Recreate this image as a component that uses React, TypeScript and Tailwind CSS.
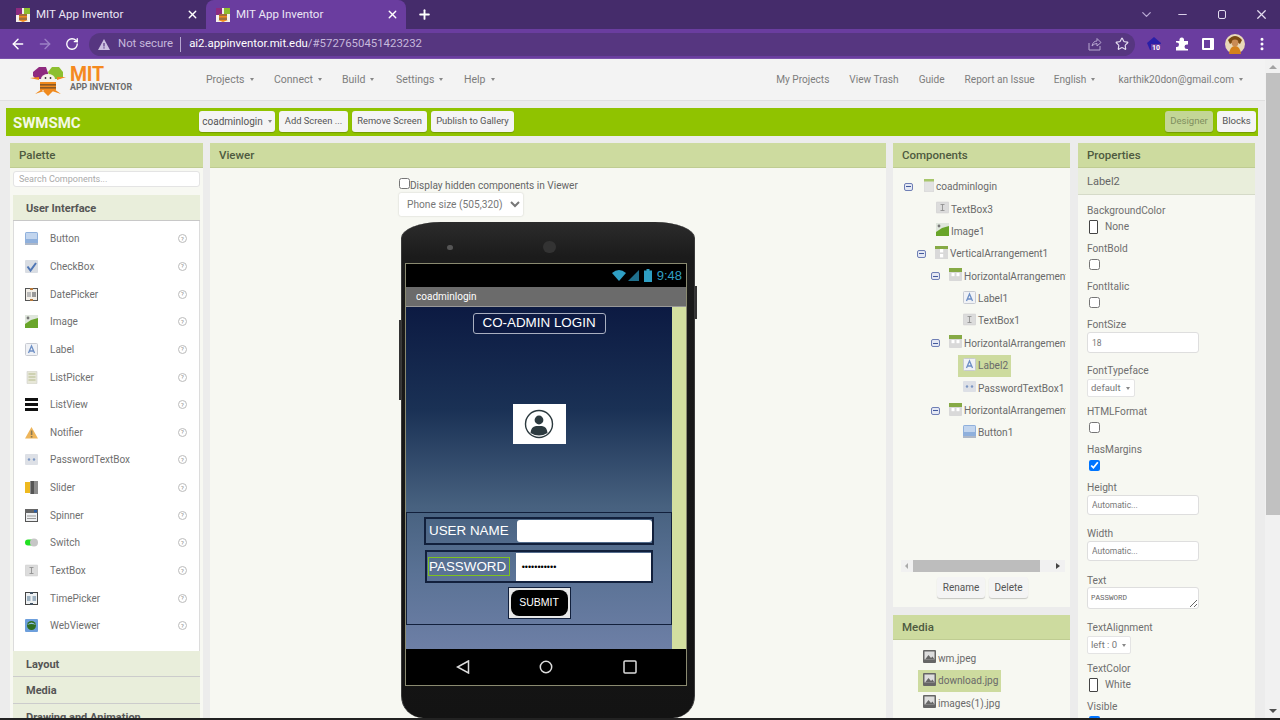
import React from "react";
import { ArrowLeft, ArrowRight, RotateCw, Star, ChevronDown, Minus, X, Plus, EllipsisVertical } from "lucide-react";

const Fav = () => (
  <svg width="14" height="14" viewBox="0 0 14 14" className="shrink-0">
    <rect width="14" height="14" fill="#f4f1ec" />
    <rect x="0" y="0" width="6" height="7" fill="#8e2a7f" />
    <rect x="8" y="0" width="6" height="6" fill="#8dbf2f" />
    <rect x="3" y="6" width="8" height="6" fill="#a0703a" />
    <rect x="3" y="8" width="8" height="1.5" fill="#f08a1d" />
    <path d="M2 12 L7 14 L12 12 Z" fill="#f08a1d" />
  </svg>
);

const Tab = ({ active }: { active?: boolean }) => (
  <div className={"flex items-center h-[29px] w-[200px] pl-[10px] pr-[7px] rounded-t-[8px] " + (active ? "bg-[#6a3d9f]" : "bg-transparent")}>
    <Fav />
    <span className="ml-[6px] flex-1 text-[11.5px] text-[#ece6f5] whitespace-nowrap">MIT App Inventor</span>
    <X size={13} strokeWidth={2.5} className="text-white" />
  </div>
);

const Caret = () => <span className="ml-[5px] inline-block w-0 h-0 border-x-[2px] border-x-transparent border-t-[3px] border-t-[#888]" />;

const Logo = () => (
  <div className="flex items-start w-[102px] h-[32px] relative">
    <svg width="36" height="32" viewBox="0 0 36 32" className="shrink-0">
      <path d="M3 8 L9 3 L16 3 L18 9 L18 15 L6 15 L3 12 Z" fill="#8e2a7f" />
      <path d="M18 8 L22 3 L29 3 L33 8 L33 13 L29 15 L20 15 Z" fill="#8dbf2f" />
      <path d="M0 14 L9 13 L9 16 Z M36 13 L27 13 L27 16 Z" fill="#f08a1d" />
      <ellipse cx="18" cy="15" rx="7" ry="5" fill="#f7f3ea" />
      <circle cx="15.5" cy="14" r="0.9" fill="#333" />
      <circle cx="20.5" cy="14" r="0.9" fill="#333" />
      <rect x="10" y="18" width="16" height="8" fill="#f08a1d" />
      <rect x="10" y="20" width="16" height="1.6" fill="#8a5a26" />
      <rect x="10" y="23" width="16" height="1.6" fill="#8a5a26" />
      <path d="M12 26 L18 32 L24 26 Z M5 30 L12 25 L14 27 Z M31 30 L24 25 L22 27 Z" fill="#f08a1d" />
    </svg>
    <div className="ml-[4px] flex flex-col">
      <span className="text-[19.5px] leading-[16px] mt-[3px] font-bold text-[#f58a1f] tracking-[-0.2px]">MIT</span>
      <span className="text-[8.8px] leading-[8px] font-bold text-[#6c6c6c] whitespace-nowrap">APP INVENTOR</span>
    </div>
  </div>
);

const GBtn = ({ children, w, caret, selected }: { children: React.ReactNode; w: string; caret?: boolean; selected?: boolean }) => (
  <div className={"flex items-center justify-center h-[21px] rounded-[3px] whitespace-nowrap shadow-[0_1px_1px_rgba(0,0,0,0.2)] " + w + " " + (selected ? "bg-[#c3d696] text-[#7f8f5f]" : "bg-[#f4f4f4] text-[#555]")}>
    {children}
    {caret && <Caret />}
  </div>
);

const ic = "shrink-0 w-[13px] h-[13px]";
type IP = { name: string };
const Ico = ({ name }: IP) => {
  switch (name) {
    case "button":
      return (<svg viewBox="0 0 13 13" className={ic}><rect width="13" height="13" rx="1.5" fill="#8fb0dc" /><rect x="1" y="1" width="11" height="6" fill="#c2d5ee" /><rect x="0" y="11" width="13" height="2" fill="#aeb8c8" /></svg>);
    case "check":
      return (<svg viewBox="0 0 13 13" className={ic}><rect width="13" height="13" rx="1" fill="#d9dde3" /><path d="M2.5 6.5 L5.5 10.5 L11 3" stroke="#4f76b5" strokeWidth="2" fill="none" /></svg>);
    case "date":
      return (<svg viewBox="0 0 13 13" className={ic}><rect x=".5" y=".5" width="12" height="12" fill="#f3efe8" stroke="#555" /><rect x="2" y="4" width="4" height="5" fill="#bbb" /><rect x="7" y="4" width="4" height="5" fill="#999" /><rect x="5" y="0" width="3" height="2" fill="#b7793a" /><rect x="5" y="11" width="3" height="2" fill="#b7793a" /></svg>);
    case "image":
      return (<svg viewBox="0 0 13 13" className={ic}><rect width="13" height="13" fill="#dfe6dc" /><circle cx="3" cy="3" r="1.4" fill="#777" /><path d="M0 9 L6 5 L13 3 L13 13 L0 13 Z" fill="#69a52a" /></svg>);
    case "label":
      return (<svg viewBox="0 0 13 13" className={ic}><rect x=".5" y=".5" width="12" height="12" rx="1" fill="#f0f2f6" stroke="#c8cbd2" /><path d="M3.5 10 L6.5 3 L9.5 10 M4.7 8 L8.3 8" stroke="#6d8fc5" strokeWidth="1.3" fill="none" /></svg>);
    case "list":
      return (<svg viewBox="0 0 13 13" className={ic}><rect x="2" y="0" width="10" height="13" rx="1" fill="#e7e7d8" stroke="#ccc" strokeWidth=".6" /><path d="M3.5 3H10.5M3.5 6H10.5M3.5 9H10.5" stroke="#b5bb8c" strokeWidth="1" /></svg>);
    case "listview":
      return (<svg viewBox="0 0 13 13" className={ic}><rect width="13" height="3" fill="#111" /><rect y="5" width="13" height="3" fill="#111" /><rect y="10" width="13" height="3" fill="#111" /></svg>);
    case "notifier":
      return (<svg viewBox="0 0 13 13" className={ic}><path d="M6.5 1 L13 12.5 L0 12.5 Z" fill="#eeb55a" /><rect x="5.8" y="4.5" width="1.6" height="4.5" fill="#8a7a55" /><rect x="5.8" y="10" width="1.6" height="1.6" fill="#8a7a55" /></svg>);
    case "password":
      return (<svg viewBox="0 0 13 13" className={ic}><rect width="13" height="11" y="1" rx="1" fill="#dde0e6" /><circle cx="4" cy="6.5" r="1.2" fill="#7b96c2" /><circle cx="9" cy="6.5" r="1.2" fill="#7b96c2" /></svg>);
    case "slider":
      return (<svg viewBox="0 0 13 13" className={ic}><rect width="5" height="11" y="1" fill="#eeb91f" /><rect x="5" width="8" height="13" fill="#8c8c8c" /><rect x="6" y="0" width="3" height="13" fill="#555" /></svg>);
    case "spinner":
      return (<svg viewBox="0 0 13 13" className={ic}><rect x=".5" y=".5" width="12" height="12" fill="#eef0f2" stroke="#555" /><rect x="0" y="0" width="13" height="4" fill="#666" /><rect x="9" y="1" width="3" height="2.4" fill="#2c5fa8" /><path d="M2 7H11M2 9.5H11" stroke="#999" /></svg>);
    case "switch":
      return (<svg viewBox="0 0 13 13" className={ic}><rect x="0" y="3.5" width="10" height="6" rx="3" fill="#22e022" /><circle cx="9" cy="6.5" r="4" fill="#c6c6c6" /></svg>);
    case "textbox":
      return (<svg viewBox="0 0 13 13" className={ic}><rect y="1" width="13" height="11" rx="1" fill="#dcdcdc" stroke="#ccc" strokeWidth=".5" /><path d="M4.5 3.5H8.5M4.5 9.5H8.5M6.5 3.5V9.5" stroke="#888" strokeWidth=".8" /></svg>);
    case "time":
      return (<svg viewBox="0 0 13 13" className={ic}><rect x=".5" y=".5" width="12" height="12" fill="#eef1f3" stroke="#444" /><rect x="2" y="4" width="3.5" height="5" fill="#9cb0c0" /><rect x="7.5" y="4" width="3.5" height="5" fill="#9cb0c0" /><rect x="5" y="0" width="3" height="2" fill="#456" /><rect x="5" y="11" width="3" height="2" fill="#456" /></svg>);
    case "web":
      return (<svg viewBox="0 0 13 13" className={ic}><rect width="13" height="13" rx="1" fill="#6d9fdc" /><circle cx="6.5" cy="6.5" r="4.5" fill="#2f6e22" /><path d="M2 6 Q6.5 1 11 6 Q6.5 4 2 6" fill="#8fc0e8" /></svg>);
    case "form":
      return (<svg viewBox="0 0 10 13" className="shrink-0 w-[10px] h-[13px] ml-[2px]"><rect y="0" width="10" height="13" rx="1.5" fill="#e2e2e2" stroke="#ccc" strokeWidth=".5" /><rect width="10" height="2.5" fill="#a7c66b" /></svg>);
    case "vert":
      return (<svg viewBox="0 0 13 13" className={ic}><rect width="13" height="13" fill="#d9d9d9" /><rect x="0" width="13" height="3" fill="#86aa45" /><rect x="5" y="3" width="3.2" height="3.4" fill="#fff" /><rect x="5" y="8" width="3.2" height="3.4" fill="#fff" /></svg>);
    case "horiz":
      return (<svg viewBox="0 0 13 13" className={ic}><rect width="13" height="13" rx="1" fill="#d9d9d9" /><rect width="13" height="4" fill="#86aa45" /><rect x="2.5" y="5" width="3" height="3.2" fill="#fff" /><rect x="7.5" y="5" width="3" height="3.2" fill="#fff" /></svg>);
    case "media":
      return (<svg viewBox="0 0 13 13" className={ic}><rect width="13" height="13" rx="1" fill="#666" /><rect x="1.5" y="1.5" width="10" height="8" fill="#ddd" /><path d="M2 9.5 L5.5 5 L8 8 L9.5 6.5 L11.5 9.5 Z" fill="#666" /></svg>);
  }
  return null;
};

const palette: [string, string][] = [
  ["button", "Button"], ["check", "CheckBox"], ["date", "DatePicker"], ["image", "Image"], ["label", "Label"],
  ["list", "ListPicker"], ["listview", "ListView"], ["notifier", "Notifier"], ["password", "PasswordTextBox"],
  ["slider", "Slider"], ["spinner", "Spinner"], ["switch", "Switch"], ["textbox", "TextBox"], ["time", "TimePicker"], ["web", "WebViewer"],
];

const Head = ({ children }: { children: React.ReactNode }) => (
  <div className="h-[25px] shrink-0 flex items-center pl-[9px] pt-[2px] bg-[#cddb9f] border-b border-[#bfcc92] text-[11.5px] font-medium text-[#4e5a40]">{children}</div>
);

const Sec = ({ children, cls }: { children: React.ReactNode; cls: string }) => (
  <div className={"mx-[3px] flex items-center pl-[13px] pt-[3px] bg-[#e9eedb] text-[11px] font-bold text-[#555] whitespace-nowrap " + cls}>{children}</div>
);

const Palette = () => (
  <div className="w-[193px] shrink-0 bg-[#f7f8f2] flex flex-col overflow-hidden">
    <Head>Palette</Head>
    <input readOnly placeholder="Search Components..." className="mx-[3px] mt-[3px] h-[16px] shrink-0 bg-white rounded-[3px] border border-[#e4e4e4] px-[5px] text-[9px] placeholder:text-[#aaa] outline-none" />
    <Sec cls="mt-[8px] h-[26px] shrink-0 border-b border-[#c8c8c8]">User Interface</Sec>
    <div className="mx-[3px] h-[430px] shrink-0 bg-white border-x border-[#dcdcdc] pt-[4px]">
      {palette.map(([n, t]) => (
        <div key={t} className="h-[27.65px] flex items-center pl-[11px] pr-[12px]">
          <Ico name={n} />
          <span className="ml-[12px] flex-1 text-[10px] text-[#6f6f6f]">{t}</span>
          <span className="w-[9px] h-[9px] rounded-full border border-[#bbb] flex items-center justify-center text-[6px] leading-none text-[#888]">?</span>
        </div>
      ))}
    </div>
    <Sec cls="h-[26px] shrink-0 border-b border-[#ccc]">Layout</Sec>
    <Sec cls="h-[27px] shrink-0 border-b border-[#ccc]">Media</Sec>
    <Sec cls="h-[26px] shrink-0">Drawing and Animation</Sec>
  </div>
);

const Screen = () => (
  <div className="w-[282px] border border-[#8a8a70] flex flex-col">
    <div className="h-[23px] bg-black flex items-center justify-end pr-[4px]">
      <svg width="27" height="13" viewBox="0 0 27 13">
        <path d="M0 4 Q7 -2 14 4 L7 12 Z" fill="#2f9fc4" />
        <path d="M16 12 L27 12 L27 1 Z" fill="#1f6f8c" />
      </svg>
      <svg width="8" height="13" viewBox="0 0 8 13" className="ml-[5px]"><rect x="2.5" width="3" height="2" fill="#2f9fc4" /><rect y="1.5" width="8" height="11.5" fill="#2f9fc4" /></svg>
      <span className="ml-[5px] text-[13px] leading-none text-[#2f9fc4] [font-family:'Liberation_Sans',sans-serif]">9:48</span>
    </div>
    <div className="h-[20px] bg-[#6b6b6b] flex items-center pl-[10px] text-[10px] text-white border-b border-[#999]">coadminlogin</div>
    <div className="h-[342px] flex [font-family:'Liberation_Sans',sans-serif]">
      <div className="w-[267px] flex flex-col items-center bg-[linear-gradient(180deg,#0c1a42_0%,#1a3155_30%,#47617f_58%,#5a7295_78%,#6d7fa6_100%)]">
        <div className="mt-[6px] w-[133px] h-[21px] shrink-0 border border-[#a9afc0] rounded-[3px] bg-[#0d1a42] flex items-center justify-center text-[13.4px] text-white">CO-ADMIN LOGIN</div>
        <div className="mt-[70px] w-[53px] h-[40px] shrink-0 bg-white flex items-center justify-center">
          <svg width="30" height="30" viewBox="0 0 30 30">
            <circle cx="15" cy="15" r="13.5" fill="none" stroke="#2c3a3f" strokeWidth="1.4" />
            <circle cx="15" cy="11" r="4.4" fill="#2c3a3f" />
            <path d="M6.5 24 Q7 17.5 12 17 L18 17 Q23 17.5 23.5 24 Q15 29 6.5 24 Z" fill="#2c3a3f" />
          </svg>
        </div>
        <div className="mt-[68px] w-[266px] h-[113px] shrink-0 border border-[#12203c] flex flex-col items-center">
          <div className="mt-[4px] w-[230px] h-[28px] border-2 border-[#12203c] flex items-center pl-[3px]">
            <span className="w-[88px] text-[13.4px] text-white whitespace-nowrap">USER NAME</span>
            <div className="w-[135px] h-[22px] bg-white rounded-[3px]" />
          </div>
          <div className="mt-[5px] w-[228px] h-[33px] border-2 border-[#12203c] flex items-center pl-[1px]">
            <span className="w-[82px] h-[19px] border border-[#7dc21e] text-[13.4px] leading-[17px] text-white whitespace-nowrap">PASSWORD</span>
            <div className="ml-[6px] w-[136px] h-[28px] bg-white flex items-center pl-[6px] pt-[2px] text-[9px] text-black">•••••••••••</div>
          </div>
          <div className="mt-[4px] w-[63px] h-[32px] border border-[#12203c] bg-[#e8e8e8] flex items-center justify-center">
            <div className="w-[57px] h-[26px] bg-black rounded-[8px] flex items-center justify-center text-[10.5px] text-white">SUBMIT</div>
          </div>
        </div>
      </div>
      <div className="w-[14px] bg-[#d3dfa0]" />
    </div>
    <div className="h-[36px] bg-black flex items-center">
      <svg width="14" height="14" viewBox="0 0 14 14" className="ml-[50px]"><path d="M12.5 1 L1.5 7 L12.5 13 Z" fill="none" stroke="#ddd" strokeWidth="1.5" /></svg>
      <svg width="14" height="14" viewBox="0 0 14 14" className="ml-[69px]"><circle cx="7" cy="7" r="5.7" fill="none" stroke="#ddd" strokeWidth="1.5" /></svg>
      <svg width="14" height="14" viewBox="0 0 14 14" className="ml-[70px]"><rect x="1" y="1" width="12" height="12" rx="1" fill="none" stroke="#ddd" strokeWidth="1.5" /></svg>
    </div>
  </div>
);

const Viewer = () => (
  <div className="w-[676px] shrink-0 bg-[#f7f8f2] flex flex-col overflow-hidden">
    <Head>Viewer</Head>
    <div className="flex-1 flex flex-col items-center overflow-hidden">
      <div className="w-[298px] shrink-0">
        <label className="mt-[10px] flex items-start h-[15px] text-[10.1px] text-[#666] whitespace-nowrap">
          <input type="checkbox" readOnly className="w-[11px] h-[11px] m-0" />
          <span className="leading-[15px]">Display hidden components in Viewer</span>
        </label>
        <select className="block w-[124px] h-[23px] bg-white rounded-[2px] shadow-[0_0_2px_rgba(0,0,0,0.2)] text-[10.2px] text-[#777] pl-[4px] outline-none">
          <option>Phone size (505,320)</option>
        </select>
        <div className="relative mt-[6px] ml-[2px] w-[294px] h-[496px] pt-[41px] pl-[3px] bg-[linear-gradient(180deg,#2c2c2c_0%,#1b1b1b_7%,#131313_100%)] rounded-[40px_40px_22px_22px/16px_16px_22px_22px] border-x border-[#3a3a3a]">
          <span className="absolute -left-[3px] top-[98px] w-[2px] h-[80px] bg-[#333]" />
          <span className="absolute -right-[3px] top-[64px] w-[2px] h-[33px] bg-[#333]" />
          <span className="absolute left-[45px] top-[23px] w-[6px] h-[5px] rounded-full bg-[#555]" />
          <span className="absolute left-[141px] top-[19px] w-[13px] h-[12px] rounded-full bg-[#333]" />
          <Screen />
        </div>
      </div>
    </div>
  </div>
);

const MinusBox = () => (
  <span className="shrink-0 mr-[4px] w-[9px] h-[8px] rounded-[2px] border border-[#6f7fb5] bg-[#e4e8f3] flex items-center justify-center">
    <span className="w-[5px] h-[1px] bg-[#445a9c]" />
  </span>
);

const TreeRow = ({ pl, icon, text, minus, sel }: { pl: string; icon: string; text: string; minus?: boolean; sel?: boolean }) => (
  <div className={"h-[22.4px] flex items-center whitespace-nowrap " + pl}>
    {minus && <MinusBox />}
    <span className={"h-full flex items-center pl-[5px] pr-[3px] " + (sel ? "bg-[#cddb9f]" : "")}>
      <span className="-mt-[3px] flex"><Ico name={icon} /></span>
      <span className="ml-[2px] text-[10.1px] text-[#6a6a6a]">{text}</span>
    </span>
  </div>
);

const Components = () => (
  <div className="w-[177px] shrink-0 flex flex-col">
    <div className="h-[464px] shrink-0 bg-[#f7f8f2] flex flex-col overflow-hidden">
      <Head>Components</Head>
      <div className="mt-[7.5px] h-[384.5px] shrink-0 overflow-hidden mr-[4px]">
        <TreeRow pl="pl-[11px]" icon="form" text="coadminlogin" minus />
        <TreeRow pl="pl-[38px]" icon="textbox" text="TextBox3" />
        <TreeRow pl="pl-[38px]" icon="image" text="Image1" />
        <TreeRow pl="pl-[24px]" icon="vert" text="VerticalArrangement1" minus />
        <TreeRow pl="pl-[38px]" icon="horiz" text="HorizontalArrangement1" minus />
        <TreeRow pl="pl-[65px]" icon="label" text="Label1" />
        <TreeRow pl="pl-[65px]" icon="textbox" text="TextBox1" />
        <TreeRow pl="pl-[38px]" icon="horiz" text="HorizontalArrangement2" minus />
        <TreeRow pl="pl-[65px]" icon="label" text="Label2" sel />
        <TreeRow pl="pl-[65px]" icon="password" text="PasswordTextBox1" />
        <TreeRow pl="pl-[38px]" icon="horiz" text="HorizontalArrangement3" minus />
        <TreeRow pl="pl-[65px]" icon="button" text="Button1" />
      </div>
      <div className="ml-[8px] w-[164px] h-[12px] shrink-0 bg-[#f1f1f1] flex items-center">
        <span className="ml-[4px] w-0 h-0 border-y-[3px] border-y-transparent border-r-[3px] border-r-[#aaa]" />
        <span className="ml-[5px] w-[127px] h-[12px] bg-[#bdbdbd]" />
        <span className="ml-[16px] w-0 h-0 border-y-[3px] border-y-transparent border-l-[4px] border-l-[#444]" />
      </div>
      <div className="mt-[5px] pl-[44px] flex gap-[4px]">
        <GBtn w="w-[48px] text-[10px]">Rename</GBtn>
        <GBtn w="w-[39px] text-[10px]">Delete</GBtn>
      </div>
    </div>
    <div className="mt-[8px] flex-1 bg-[#f7f8f2] flex flex-col overflow-hidden">
      <Head>Media</Head>
      <div className="mt-[7px] pl-[25px] flex flex-col">
        {[["wm.jpeg", false], ["download.jpg", true], ["images(1).jpg", false], ["", false]].map(([t, s]) => (
          <div key={t as string} className="h-[22.5px] flex">
            <span className={"h-full flex items-center pl-[5px] pr-[3px] " + (s ? "bg-[#cddb9f]" : "")}>
              <span className="-mt-[3px] flex"><Ico name="media" /></span>
              <span className="ml-[2px] text-[10.1px] text-[#6a6a6a]">{t as string}</span>
            </span>
          </div>
        ))}
      </div>
    </div>
  </div>
);

const Prop = ({ label, mt, children }: { label: string; mt: string; children: React.ReactNode }) => (
  <div className={mt}>
    <div className="h-[14px] leading-[14px] text-[10.2px] text-[#6f6f6f]">{label}</div>
    {children}
  </div>
);

const Swatch = ({ t }: { t: string }) => (
  <div className="ml-[2px] mt-[2px] h-[14px] flex items-center text-[10.2px] text-[#6f6f6f]">
    <span className="w-[9px] h-[14px] bg-white border border-[#444] rounded-[1px]" />
    <span className="ml-[7px]">{t}</span>
  </div>
);

const Cb = ({ on, mt }: { on?: boolean; mt: string }) => (
  <input type="checkbox" readOnly checked={!!on} className={"block ml-[2px] w-[11px] h-[11px] " + mt} />
);

const TBox = ({ v, placeholder, cls }: { v?: string; placeholder?: string; cls: string }) => (
  <input readOnly value={v} placeholder={placeholder} className={"block w-[112px] bg-white rounded-[3px] border border-[#dedede] px-[4px] text-[8.5px] text-[#777] placeholder:text-[#777] outline-none " + cls} />
);

const Drop = ({ t, w }: { t: string; w: string }) => (
  <div className={"h-[18px] bg-white rounded-[2px] border border-[#e4e4e4] flex items-center pl-[3px] text-[9.5px] text-[#777] whitespace-nowrap " + w}>
    {t}
    <Caret />
  </div>
);

const Properties = () => (
  <div className="w-[177px] shrink-0 bg-[#f7f8f2] flex flex-col overflow-hidden">
    <Head>Properties</Head>
    <div className="h-[27px] shrink-0 bg-[#e9eedb] border-b border-[#d5dac8] flex items-center pl-[9px] pt-[3px] text-[11px] text-[#666]">Label2</div>
    <div className="pl-[9px] pt-[9px]">
      <Prop label="BackgroundColor" mt="mt-0"><Swatch t="None" /></Prop>
      <Prop label="FontBold" mt="mt-[8px]"><Cb mt="mt-[3px]" /></Prop>
      <Prop label="FontItalic" mt="mt-[10px]"><Cb mt="mt-[3px]" /></Prop>
      <Prop label="FontSize" mt="mt-[10px]"><TBox v="18" cls="h-[21px]" /></Prop>
      <Prop label="FontTypeface" mt="mt-[11px]"><div className="mt-[1px]"><Drop t="default" w="w-[48px]" /></div></Prop>
      <Prop label="HTMLFormat" mt="mt-[8px]"><Cb mt="mt-[3px]" /></Prop>
      <Prop label="HasMargins" mt="mt-[10px]"><Cb on mt="mt-[3px]" /></Prop>
      <Prop label="Height" mt="mt-[10px]"><TBox placeholder="Automatic..." cls="h-[20px]" /></Prop>
      <Prop label="Width" mt="mt-[12px]"><TBox placeholder="Automatic..." cls="h-[20px]" /></Prop>
      <Prop label="Text" mt="mt-[13px]">
        <textarea readOnly value="PASSWORD" className="block -mt-[1px] w-[112px] h-[22px] bg-white rounded-[3px] border border-[#dedede] px-[3px] py-[5px] text-[7.5px] leading-[10px] [font-family:'Liberation_Mono',monospace] text-[#666] outline-none" />
      </Prop>
      <Prop label="TextAlignment" mt="mt-[12px]"><div className="mt-[1px]"><Drop t="left : 0" w="w-[44px]" /></div></Prop>
      <Prop label="TextColor" mt="mt-[8px]"><Swatch t="White" /></Prop>
      <Prop label="Visible" mt="mt-[8px]"><Cb on mt="mt-[2px]" /></Prop>
    </div>
  </div>
);

export default function App() {
  return (
    <div className="w-[1280px] h-[720px] overflow-hidden flex flex-col bg-[#ececec] [font-family:Roboto,sans-serif]">
      <div className="h-[29px] shrink-0 bg-[#452c6b] flex items-center pl-[6px] pr-[11px]">
        <Tab />
        <Tab active />
        <Plus size={15} strokeWidth={3} className="ml-[11px] text-white" />
        <div className="flex-1" />
        <ChevronDown size={15} className="text-[#b9a9d3]" />
        <Minus size={13} className="ml-[22px] text-[#d9d0e8]" />
        <span className="ml-[29px] w-[8px] h-[9px] border border-[#e3dcef] rounded-[2px]" />
        <X size={15} className="ml-[28px] text-[#e3dcef]" />
      </div>
      <div className="h-[30px] shrink-0 bg-[#6a3d9f] flex items-center pl-[10px] pr-[10px] pt-[1px] border-b border-[#7a52ab]">
        <ArrowLeft size={16} strokeWidth={2.2} className="text-white" />
        <ArrowRight size={16} strokeWidth={2} className="ml-[11px] text-[#9c81c6]" />
        <RotateCw size={14} strokeWidth={2.3} className="ml-[12px] text-white" />
        <div className="ml-[10px] w-[1046px] h-[23px] rounded-full bg-[#563680] flex items-center pl-[9px] pr-[6px]">
          <svg width="12" height="11" viewBox="0 0 12 11"><path d="M6 0 L12 11 L0 11 Z" fill="#cbbfe0" /><rect x="5.4" y="4" width="1.2" height="3.5" fill="#563680" /><rect x="5.4" y="8.3" width="1.2" height="1.2" fill="#563680" /></svg>
          <span className="ml-[8px] text-[11.4px] text-[#c6b8dc]">Not secure</span>
          <span className="ml-[7px] w-px h-[15px] bg-[#b7a7d0]" />
          <span className="ml-[8px] text-[11.4px] text-white">ai2.appinventor.mit.edu<span className="text-[#c6b8dc]">/#5727650451423232</span></span>
          <div className="flex-1" />
          <svg width="14" height="14" viewBox="0 0 14 14" fill="none" stroke="#b7a7d0" strokeWidth="1"><path d="M1 6V13H12V9" /><path d="M4 9 Q5 4 9 4 V1.5 L13 5.5 L9 9 V6.5 Q6 6.5 4 9 Z" /></svg>
          <Star size={14} className="ml-[13px] text-[#e4dcef]" />
        </div>
        <div className="relative ml-[11px] w-[16px] h-[16px]">
          <svg width="16" height="16" viewBox="0 0 16 16"><path d="M1 7 L8 1 L15 7 L13 14 L4 14 Z" fill="#2a1fa8" /></svg>
          <span className="absolute left-[5px] top-[8px] text-[7px] font-bold leading-[9px] text-white bg-[#6a3d9f] px-[1px]">10</span>
        </div>
        <svg width="14" height="14" viewBox="0 0 14 14" className="ml-[13px]" fill="#fff"><path d="M1 4 H4.5 Q4 0.5 6.8 0.5 Q9.5 0.5 9 4 H13 V7.5 Q9.5 7 9.5 9.7 Q9.5 12.5 13 12 V13.5 H1 V10 Q4 10.4 4 7.5 Q4 5 1 5.5 Z" /></svg>
        <span className="ml-[13px] w-[12px] h-[12px] border-2 border-white border-r-[4px] rounded-[1px]" />
        <svg width="20" height="20" viewBox="0 0 20 20" className="ml-[11px]"><circle cx="10" cy="10" r="10" fill="#e9d9b8" /><path d="M3 6 Q10 -2 17 6 L15 10 Q10 6 5 10 Z" fill="#7a4a12" /><path d="M4 20 Q5 12 10 12 Q15 12 16 20 Z" fill="#d4811c" /><circle cx="10" cy="9" r="3.4" fill="#c98c55" /></svg>
        <EllipsisVertical size={16} strokeWidth={2.5} className="ml-[9px] text-white" />
      </div>
      <div className="flex-1 flex min-h-0">
        <div className="w-[1265px] shrink-0 flex flex-col overflow-hidden">
          <div className="h-[42px] shrink-0 bg-[#f3f3f3] border-b border-[#e0e0e0] flex items-center pl-[30px] text-[10.5px] text-[#7d7d7d] whitespace-nowrap">
            <Logo />
            <span className="ml-[74px] w-[68px] flex items-center">Projects<Caret /></span>
            <span className="w-[68px] flex items-center">Connect<Caret /></span>
            <span className="w-[54px] flex items-center">Build<Caret /></span>
            <span className="w-[68px] flex items-center">Settings<Caret /></span>
            <span className="flex items-center">Help<Caret /></span>
            <div className="flex-1" />
            <span className="text-[10.1px]">My Projects</span>
            <span className="ml-[20px] text-[10.1px]">View Trash</span>
            <span className="ml-[20px] text-[10.1px]">Guide</span>
            <span className="ml-[20px] text-[10.1px]">Report an Issue</span>
            <span className="ml-[19px] text-[10.1px] flex items-center">English<Caret /></span>
            <span className="ml-[23px] text-[10.1px] flex items-center mr-[22px]">karthik20don@gmail.com<Caret /></span>
          </div>
          <div className="mt-[7px] ml-[6px] w-[1252px] h-[28px] shrink-0 bg-[#90c300] flex items-center pl-[7px] pr-[2px] pb-[1px]">
            <span className="w-[186px] mt-[3px] text-[15px] font-bold text-[#f4f8e4]">SWMSMC</span>
            <div className="flex gap-[4px]">
              <GBtn w="w-[76px] text-[10px]" caret>coadminlogin</GBtn>
              <GBtn w="w-[69px] text-[9.4px]">Add Screen ...</GBtn>
              <GBtn w="w-[75px] text-[9.4px]">Remove Screen</GBtn>
              <GBtn w="w-[83px] text-[9.4px]">Publish to Gallery</GBtn>
            </div>
            <div className="flex-1" />
            <div className="flex gap-[4px]">
              <GBtn w="w-[48px] text-[9.6px]" selected>Designer</GBtn>
              <GBtn w="w-[39px] text-[9.6px]">Blocks</GBtn>
            </div>
          </div>
          <div className="mt-[7px] flex-1 min-h-0 flex pl-[10px]">
            <Palette />
            <div className="ml-[7px] flex"><Viewer /></div>
            <div className="ml-[7px] flex"><Components /></div>
            <div className="ml-[8px] flex"><Properties /></div>
          </div>
        </div>
        <div className="w-[15px] shrink-0 bg-[#f1f1f1] flex flex-col items-center">
          <span className="mt-[6px] w-0 h-0 border-x-[4px] border-x-transparent border-b-[4px] border-b-[#a3a3a3]" />
          <span className="mt-[4px] w-[14px] h-[442px] bg-[#c1c1c1]" />
          <div className="flex-1" />
          <span className="mb-[5px] w-0 h-0 border-x-[4px] border-x-transparent border-t-[4px] border-t-[#505050]" />
        </div>
      </div>
      <div className="h-[2px] shrink-0 bg-[#222]" />
    </div>
  );
}
